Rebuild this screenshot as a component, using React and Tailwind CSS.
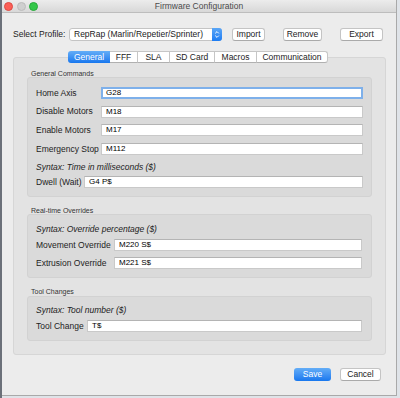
import React from 'react';

const font = { fontFamily: '"Liberation Sans", Arial, sans-serif' };

const tabs = [
  { name: 'General', w: 'w-[42px]', active: true },
  { name: 'FFF', w: 'w-[28px]' },
  { name: 'SLA', w: 'w-[32px]' },
  { name: 'SD Card', w: 'w-[45px]' },
  { name: 'Macros', w: 'w-[42px]' },
  { name: 'Communication', w: 'w-[71px]' },
];

const Field = ({ label, value, labelW, focused }) => (
  <div className="flex items-center h-[12px]">
    <div className={`${labelW} shrink-0 text-[8.5px] text-[#222] leading-none`}>{label}</div>
    <div
      className={
        focused
          ? 'flex-1 h-[12px] bg-white border-2 border-[#7eb0ea] flex items-center pl-[3px] text-[8px] text-black'
          : 'flex-1 h-[12px] bg-white border border-[#c9c9c9] border-t-[#b4b4b4] flex items-center pl-[4px] text-[8px] text-black'
      }
    >
      {value}
    </div>
  </div>
);

const Syntax = ({ children }) => (
  <div className="h-[10px] flex items-center text-[8.5px] italic text-[#222] leading-none">{children}</div>
);

const GroupLabel = ({ children, h }) => (
  <div className={`${h} flex items-center pl-[4px] text-[7px] text-[#333] leading-none`}>{children}</div>
);

const Button = ({ children, w }) => (
  <div className={`${w} h-[13px] bg-white border border-[#c4c4c4] border-b-[#aaa] rounded-[3px] flex items-center justify-center text-[8.5px] text-[#222]`}>
    {children}
  </div>
);

export default function App() {
  return (
    <div className="w-[400px] h-[398px] flex bg-[#dfe3e8]" style={font}>
      <div className="w-[2px] h-full bg-[#6b7079]" />
      <div className="w-[395px] h-[396px] bg-[#ececec] border-r border-b border-[#a9a9a9] flex flex-col">
        {/* title bar */}
        <div className="h-[13px] shrink-0 bg-gradient-to-b from-[#ececec] to-[#d8d8d8] border-b border-[#bdbdbd] flex items-center relative">
          <div className="flex items-center gap-[3.5px] ml-[2px]">
            <div className="w-[9px] h-[9px] rounded-full bg-[#fc5f57] border border-[#de4a43]" />
            <div className="w-[9px] h-[9px] rounded-full bg-[#cfcfcf] border border-[#bcbcbc]" />
            <div className="w-[9px] h-[9px] rounded-full bg-[#33c748] border border-[#27a93a]" />
          </div>
          <div className="absolute inset-0 flex items-center justify-center text-[8.5px] text-[#4a4a4a]">
            Firmware Configuration
          </div>
        </div>

        {/* profile row */}
        <div className="mt-[15px] h-[13px] flex items-center pl-[11px]">
          <div className="w-[56px] text-[8.5px] text-[#222]">Select Profile:</div>
          <div className="w-[153px] h-[13px] bg-white border border-[#c4c4c4] rounded-[3px] flex items-center">
            <div className="flex-1 pl-[4px] text-[8.5px] text-[#222] whitespace-nowrap overflow-hidden">
              RepRap (Marlin/Repetier/Sprinter)
            </div>
            <div className="w-[10px] h-[13px] -mr-px -my-px bg-gradient-to-b from-[#5aa6f6] to-[#1b7cf3] rounded-r-[3px] flex items-center justify-center">
              <svg width="6" height="9" viewBox="0 0 6 9" fill="none" stroke="white" strokeWidth="1">
                <path d="M1.2 3.4 L3 1.6 L4.8 3.4" />
                <path d="M1.2 5.6 L3 7.4 L4.8 5.6" />
              </svg>
            </div>
          </div>
          <div className="ml-[10px]">
            <Button w="w-[33px]">Import</Button>
          </div>
          <div className="ml-[18px]">
            <Button w="w-[39px]">Remove</Button>
          </div>
          <div className="ml-[18px]">
            <Button w="w-[43px]">Export</Button>
          </div>
        </div>

        {/* tabs */}
        <div className="mt-[10px] h-[12px] flex pl-[66px] relative z-10">
          {tabs.map((t, i) => (
            <div
              key={t.name}
              className={
                t.active
                  ? `${t.w} h-[12px] rounded-l-[3px] bg-gradient-to-b from-[#63adf7] to-[#1677ee] text-white flex items-center justify-center text-[8.5px]`
                  : `${t.w} h-[12px] bg-white border-y border-r border-[#c6c6c6] border-b-[#b0b0b0] text-[#222] flex items-center justify-center text-[8.5px] ${i === tabs.length - 1 ? 'rounded-r-[3px]' : ''}`
              }
            >
              {t.name}
            </div>
          ))}
        </div>

        {/* pane */}
        <div className="-mt-[6px] ml-[11px] w-[373px] h-[298px] bg-[#e3e3e3] border border-[#d6d6d6] rounded-[3px] pt-[11px] px-[13px]">
          <GroupLabel h="h-[8px]">General Commands</GroupLabel>
          <div className="h-[120px] bg-[#dadada] border border-[#d2d2d2] rounded-[3px] pt-[9px] pl-[8px] pr-[8px]">
            <div className="flex flex-col gap-[6.6px]">
              <Field label="Home Axis" value="G28" labelW="w-[65px]" focused />
              <Field label="Disable Motors" value="M18" labelW="w-[65px]" />
              <Field label="Enable Motors" value="M17" labelW="w-[65px]" />
              <Field label="Emergency Stop" value="M112" labelW="w-[65px]" />
            </div>
            <div className="mt-[7px]">
              <Syntax>Syntax: Time in milliseconds ($)</Syntax>
            </div>
            <div className="mt-[4px]">
              <Field label="Dwell (Wait)" value="G4 P$" labelW="w-[48px]" />
            </div>
          </div>

          <div className="mt-[9px]">
            <GroupLabel h="h-[8px]">Real-time Overrides</GroupLabel>
          </div>
          <div className="h-[64px] bg-[#dadada] border border-[#d2d2d2] rounded-[3px] pt-[9px] pl-[8px] pr-[9px]">
            <Syntax>Syntax: Override percentage ($)</Syntax>
            <div className="mt-[5px] flex flex-col gap-[6px]">
              <Field label="Movement Override" value="M220 S$" labelW="w-[78px]" />
              <Field label="Extrusion Override" value="M221 S$" labelW="w-[78px]" />
            </div>
          </div>

          <div className="mt-[9px]">
            <GroupLabel h="h-[9px]">Tool Changes</GroupLabel>
          </div>
          <div className="h-[45px] bg-[#dadada] border border-[#d2d2d2] rounded-[3px] pt-[8px] pl-[8px] pr-[9px]">
            <Syntax>Syntax: Tool number ($)</Syntax>
            <div className="mt-[5px]">
              <Field label="Tool Change" value="T$" labelW="w-[51px]" />
            </div>
          </div>
        </div>

        {/* footer */}
        <div className="mt-[13px] flex justify-end pr-[15px] gap-[9px]">
          <div className="w-[37px] h-[13px] rounded-[3px] bg-gradient-to-b from-[#63adf7] to-[#1677ee] text-white flex items-center justify-center text-[8.5px]">
            Save
          </div>
          <Button w="w-[41px]">Cancel</Button>
        </div>
      </div>
    </div>
  );
}
